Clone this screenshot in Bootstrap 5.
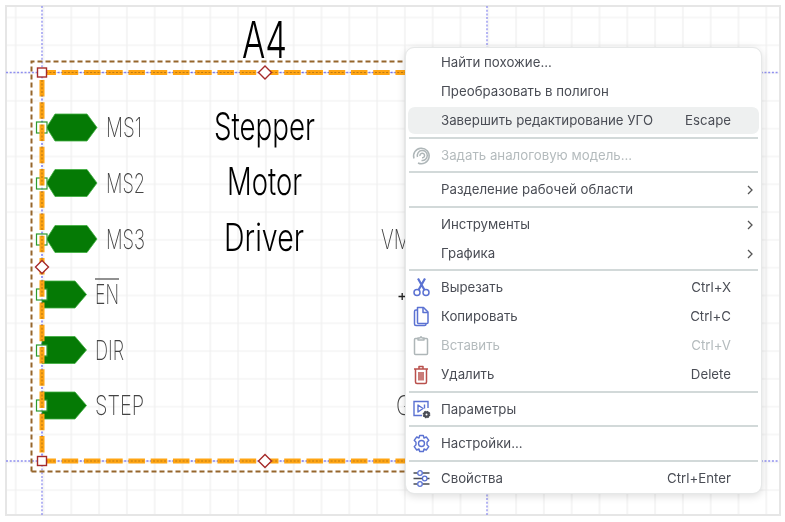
<!DOCTYPE html>
<html lang="ru">
<head>
<meta charset="utf-8">
<title>Редактор УГО</title>
<link href="https://cdn.jsdelivr.net/npm/bootstrap@5.3.0/dist/css/bootstrap.min.css" rel="stylesheet">
<style>
html,body{background:#fff;overflow:hidden}
.stage{width:785px;height:522px}
.sheet{display:block}
.cad{font-family:Inter,Roboto,sans-serif;font-weight:250}
.cad-big{fill:#000;font-weight:300}
.cad-pin{fill:#444}
.guide{mix-blend-mode:multiply}
.ctx{left:405px;top:47px;width:357px;padding:0 2px;border:1px solid #e6e8e8;border-radius:9px;box-shadow:0 2px 8px rgba(0,0,0,.14);font-family:Inter,"Noto Sans",sans-serif;font-size:13.25px;color:#4a4d55;--bs-dropdown-min-width:0}
.ctx-item{height:29px;padding:1px 28px 0 33px;border-radius:7px;color:#4a4d55;position:relative;line-height:1;border-top:1px solid transparent;border-bottom:1px solid transparent;background-clip:padding-box}
.ctx-item:hover{color:#4a4d55;background-color:#eef0f0}
.ctx-on{background-color:#eef0f0}
.ctx-off,.ctx-off:hover{color:#b4bbbd;background-color:transparent}
.ctx-ico{position:absolute;left:3px;top:3px;width:21px;height:21px}
.ctx-more{position:absolute;right:5px;top:8px;width:8px;height:12px}
.ctx-sep{height:2px;margin:1.75px 1px;background:#d2d9d9;opacity:1;border:0}
</style>
</head>
<body class="m-0">
<div class="stage position-relative">
<svg class="sheet" width="785" height="522" viewBox="0 0 785 522" xmlns="http://www.w3.org/2000/svg">
<defs>
<pattern id="gridp" x="14.700" y="16.500" width="27.8" height="27.8" patternUnits="userSpaceOnUse">
<path d="M1 0V27.8M0 1H27.8" fill="none" stroke="#efefef" stroke-width="1.200"/>
</pattern>
</defs>
<rect x="6" y="6" width="774" height="509" fill="url(#gridp)"/>
<rect x="6" y="6" width="774" height="509" fill="none" stroke="#e6e6e6" stroke-width="2"/>
<path d="M42 6V515M487 6V515M6 72.500H778M6 461H778" fill="none" stroke="#8f8ff0" stroke-width="1.300" stroke-dasharray="2 1.700"/>
<path d="M31.500 471.500V61.500H430M31.500 471.500H430" fill="none" stroke="#96662c" stroke-width="2" stroke-dasharray="5 3"/>
<g fill="#057a05" stroke="#3fae3f" stroke-width=".8">
<path d="M46.500 127.500L55 114H87L97 127.500L87 141H55Z"/>
<path d="M46.500 183L55 169.500H87L97 183L87 196.500H55Z"/>
<path d="M46.500 239L55 225.500H87L97 239L87 252.500H55Z"/>
<path d="M42 281H75L86.500 294.500L75 308H42Z"/>
<path d="M42 336.500H75L86.500 350L75 363.500H42Z"/>
<path d="M42 392H75L86.500 405.500L75 419H42Z"/>
</g>
<g fill="#fff" stroke="#2d9a2d" stroke-width="1.200">
<rect x="36.500" y="122" width="10.500" height="11"/>
<rect x="36.500" y="178" width="10.500" height="11"/>
<rect x="36.500" y="234" width="10.500" height="11"/>
<rect x="36.500" y="289" width="10.500" height="11"/>
<rect x="36.500" y="345" width="10.500" height="11"/>
<rect x="36.500" y="400" width="10.500" height="11"/>
</g>
<path d="M42 72.500H430M42 461H430" fill="none" stroke="#ffa514" stroke-width="5" stroke-dasharray="16.500 5.750" stroke-dashoffset="2.550"/>
<path d="M42 72.500V461" fill="none" stroke="#ffa514" stroke-width="5" stroke-dasharray="16.500 5.750" stroke-dashoffset="14.800"/>
<path class="guide" d="M42 72.500V461M42 72.500H430M42 461H430" fill="none" stroke="#bdbdff" stroke-width="1.200" stroke-dasharray="2 1.700"/>
<g fill="#fff" stroke="#a52a2a" stroke-width="1.400">
<rect x="37.500" y="68" width="9" height="9"/>
<rect x="37.500" y="456.500" width="9" height="9"/>
<path d="M265 66L271.500 72.500L265 79L258.500 72.500Z"/>
<path d="M265 454.500L271.500 461L265 467.500L258.500 461Z"/>
<path d="M42 260.500L48.500 267L42 273.500L35.500 267Z"/>
</g>
<g class="cad">
<text class="cad-big" x="242" y="58" font-size="51" textLength="45" lengthAdjust="spacingAndGlyphs">A4</text>
<text class="cad-big" x="214" y="140" font-size="38" textLength="101" lengthAdjust="spacingAndGlyphs">Stepper</text>
<text class="cad-big" x="227" y="195" font-size="38" textLength="75" lengthAdjust="spacingAndGlyphs">Motor</text>
<text class="cad-big" x="224" y="251" font-size="38" textLength="80" lengthAdjust="spacingAndGlyphs">Driver</text>
<text class="cad-pin" x="106" y="137" font-size="27" textLength="36" lengthAdjust="spacingAndGlyphs">MS1</text>
<text class="cad-pin" x="106" y="193" font-size="27" textLength="39" lengthAdjust="spacingAndGlyphs">MS2</text>
<text class="cad-pin" x="106" y="249" font-size="27" textLength="39" lengthAdjust="spacingAndGlyphs">MS3</text>
<text class="cad-pin" x="95" y="304" font-size="27" textLength="24" lengthAdjust="spacingAndGlyphs">EN</text>
<text class="cad-pin" x="95" y="360" font-size="27" textLength="29" lengthAdjust="spacingAndGlyphs">DIR</text>
<text class="cad-pin" x="95" y="415" font-size="27" textLength="49" lengthAdjust="spacingAndGlyphs">STEP</text>
<text class="cad-pin" x="381" y="249" font-size="27" textLength="30" lengthAdjust="spacingAndGlyphs">VM</text>
<text class="cad-pin" x="396" y="415" font-size="27" textLength="16" lengthAdjust="spacingAndGlyphs">G</text>
</g>
<path d="M95 279H119" stroke="#555" stroke-width="1.300"/>
<path d="M398.500 296.500H406M402.200 293V300" stroke="#222" stroke-width="1.300"/>
</svg>

<div class="dropdown-menu d-block position-absolute ctx">
<a class="dropdown-item d-flex align-items-center ctx-item" href="#">Найти похожие...</a>
<a class="dropdown-item d-flex align-items-center ctx-item" href="#">Преобразовать в полигон</a>
<a class="dropdown-item d-flex align-items-center justify-content-between ctx-item ctx-on" href="#"><span>Завершить редактирование УГО</span><span>Escape</span></a>
<hr class="dropdown-divider ctx-sep">
<a class="dropdown-item d-flex align-items-center ctx-item ctx-off" href="#">
<svg class="ctx-ico" viewBox="0 0 21 21" fill="none" stroke="#aeb6b8" stroke-width="1.500"><path d="M3 13.500A7.800 7.800 0 1 1 7 18M6.500 12A5 5 0 1 1 10.500 15.500M9 11A2.300 2.300 0 1 1 11 12.800"/></svg>
Задать аналоговую модель...</a>
<hr class="dropdown-divider ctx-sep">
<a class="dropdown-item d-flex align-items-center ctx-item" href="#">Разделение рабочей области
<svg class="ctx-more" viewBox="0 0 8 12" fill="none" stroke="#555" stroke-width="1.300"><path d="M2 2L6 6L2 10"/></svg></a>
<hr class="dropdown-divider ctx-sep">
<a class="dropdown-item d-flex align-items-center ctx-item" href="#">Инструменты
<svg class="ctx-more" viewBox="0 0 8 12" fill="none" stroke="#555" stroke-width="1.300"><path d="M2 2L6 6L2 10"/></svg></a>
<a class="dropdown-item d-flex align-items-center ctx-item" href="#">Графика
<svg class="ctx-more" viewBox="0 0 8 12" fill="none" stroke="#555" stroke-width="1.300"><path d="M2 2L6 6L2 10"/></svg></a>
<hr class="dropdown-divider ctx-sep">
<a class="dropdown-item d-flex align-items-center justify-content-between ctx-item" href="#">
<svg class="ctx-ico" viewBox="0 0 21 21" fill="none" stroke="#5b72d2" stroke-width="1.500"><circle cx="6" cy="15.500" r="3"/><circle cx="15" cy="15.500" r="3"/><path d="M7.500 13L14 1.500M13.500 13L7 1.500" stroke-width="2.200"/></svg>
<span>Вырезать</span><span>Ctrl+X</span></a>
<a class="dropdown-item d-flex align-items-center justify-content-between ctx-item" href="#">
<svg class="ctx-ico" viewBox="0 0 21 21" fill="none" stroke="#5b72d2" stroke-width="1.500" stroke-linejoin="round"><path d="M6.500 1.500H12.500L17 6V16.500Q17 17.500 16 17.500H7.500Q6.500 17.500 6.500 16.500Z"/><path d="M12 1.500V6.500H17"/><path d="M6.500 4H5Q3.500 4 3.500 5.500V18Q3.500 19.500 5 19.500H13.500Q15 19.500 15 18"/></svg>
<span>Копировать</span><span>Ctrl+C</span></a>
<a class="dropdown-item d-flex align-items-center justify-content-between ctx-item ctx-off" href="#">
<svg class="ctx-ico" viewBox="0 0 21 21" fill="none" stroke="#aeb6b8" stroke-width="1.500" stroke-linejoin="round"><path d="M7 3.500H4.500Q3.500 3.500 3.500 4.500V18.500Q3.500 19.500 4.500 19.500H15.500Q16.500 19.500 16.500 18.500V4.500Q16.500 3.500 15.500 3.500H13"/><path d="M7 5V3H9Q10 0.500 11 3H13V5Z"/></svg>
<span>Вставить</span><span>Ctrl+V</span></a>
<a class="dropdown-item d-flex align-items-center justify-content-between ctx-item" href="#">
<svg class="ctx-ico" viewBox="0 0 21 21" fill="none" stroke="#b9504c" stroke-width="1.500" stroke-linejoin="round"><path d="M3 5H17M8 4.500V2.500H12V4.500M4.500 5V18Q4.500 19.500 6 19.500H14Q15.500 19.500 15.500 18V5M8 8V16.500M10 8V16.500M12 8V16.500"/></svg>
<span>Удалить</span><span>Delete</span></a>
<hr class="dropdown-divider ctx-sep">
<a class="dropdown-item d-flex align-items-center ctx-item" href="#">
<svg class="ctx-ico" viewBox="0 0 21 21" fill="none" stroke="#5b72d2" stroke-width="1.400"><path d="M11 16.500H3V2.500H17V9"/><path d="M7 6L12 9.500L7 13ZM13.500 5.500V9.500" stroke-linejoin="round"/><circle cx="15.500" cy="15.500" r="3.200" fill="#4a4d55" stroke="#4a4d55" stroke-width="1.300" stroke-dasharray="1.500 1"/><circle cx="15.500" cy="15.500" r="1" fill="#fff" stroke="none"/></svg>
Параметры</a>
<hr class="dropdown-divider ctx-sep">
<a class="dropdown-item d-flex align-items-center ctx-item" href="#">
<svg class="ctx-ico" viewBox="0 0 21 21" fill="none" stroke="#5b72d2" stroke-width="1.400" stroke-linejoin="round"><path d="M8.700 2.500H12.300L13 5L15.300 4L17.800 7.300L16 9.200V11.800L17.800 13.700L15.300 17L13 16L12.300 18.500H8.700L8 16L5.700 17L3.200 13.700L5 11.800V9.200L3.200 7.300L5.700 4L8 5Z"/><circle cx="10.500" cy="10.500" r="3"/></svg>
Настройки...</a>
<hr class="dropdown-divider ctx-sep">
<a class="dropdown-item d-flex align-items-center justify-content-between ctx-item" href="#">
<svg class="ctx-ico" viewBox="0 0 21 21" fill="none" stroke="#5b72d2" stroke-width="1.300"><path d="M2.500 5H6.500M11.500 5H18.500M2.500 10.500H11.500M16 10.500H18.500M2.500 16H6.500M11.500 16H18.500" stroke="#4a4d55"/><circle cx="9" cy="5" r="2.300"/><circle cx="13.700" cy="10.500" r="2.300"/><circle cx="9" cy="16" r="2.300"/></svg>
<span>Свойства</span><span>Ctrl+Enter</span></a>
</div>
</div>
</body>
</html>
